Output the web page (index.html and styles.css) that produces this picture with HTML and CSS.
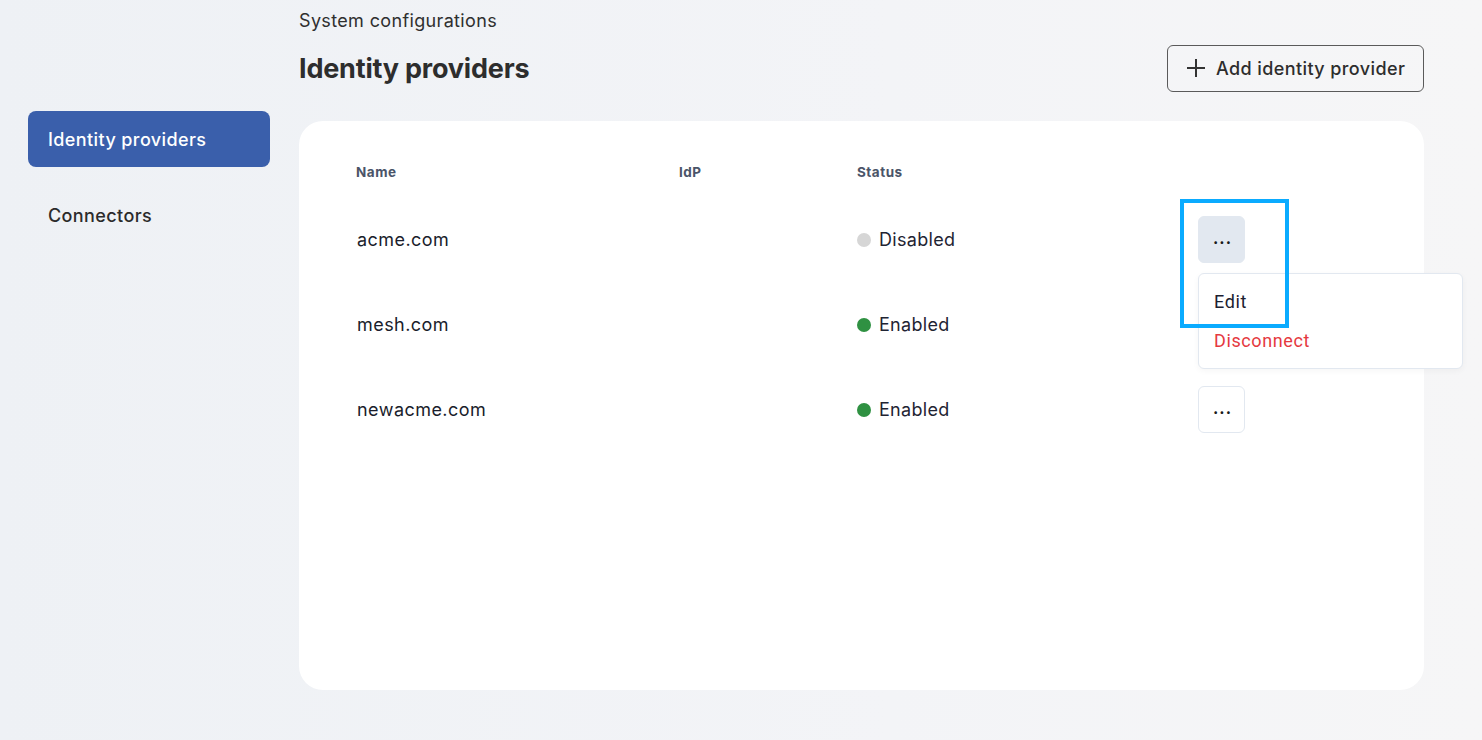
FILE: index.html
```html
<!DOCTYPE html>
<html lang="en">
<head>
    <meta charset="UTF-8">
    <title>Identity providers</title>
    <link rel="stylesheet" href="styles.css">
</head>
<body>
    <div class="layout">
        <aside class="sidebar">
            <a class="side-item active" href="#">Identity providers</a>
            <a class="side-item" href="#">Connectors</a>
        </aside>

        <main class="content">
            <div class="breadcrumb">System configurations</div>
            <div class="page-header">
                <h1>Identity providers</h1>
                <button class="add-btn">
                    <svg width="20" height="20" viewBox="0 0 20 20"><path d="M10 1v18M1 10h18" stroke="#333" stroke-width="2" fill="none"/></svg>
                    Add identity provider
                </button>
            </div>

            <section class="card">
                <div class="table">
                    <div class="row head">
                        <div>Name</div>
                        <div>IdP</div>
                        <div>Status</div>
                        <div></div>
                    </div>

                    <div class="row">
                        <div class="name">acme.com</div>
                        <div></div>
                        <div class="status"><span class="dot off"></span>Disabled</div>
                        <div class="actions">
                            <button class="more open">...</button>
                            <div class="menu">
                                <div class="menu-item">Edit</div>
                                <div class="menu-item danger">Disconnect</div>
                            </div>
                            <div class="highlight"></div>
                        </div>
                    </div>

                    <div class="row">
                        <div class="name">mesh.com</div>
                        <div></div>
                        <div class="status"><span class="dot on"></span>Enabled</div>
                        <div class="actions"></div>
                    </div>

                    <div class="row">
                        <div class="name">newacme.com</div>
                        <div></div>
                        <div class="status"><span class="dot on"></span>Enabled</div>
                        <div class="actions">
                            <button class="more">...</button>
                        </div>
                    </div>
                </div>
            </section>
        </main>
    </div>
</body>
</html>
```

FILE: styles.css
```css
* {
    margin: 0;
    padding: 0;
    box-sizing: border-box;
}

body {
    font-family: Inter, "Noto Sans", sans-serif;
    background: linear-gradient(90deg, #eef1f5 0%, #f3f4f7 60%, #f6f6f7 100%);
    color: #1f2330;
    height: 740px;
    overflow: hidden;
}

.layout {
    display: flex;
}

.sidebar {
    width: 299px;
    padding: 111px 29px 0 28px;
    display: flex;
    flex-direction: column;
    gap: 20px;
}

.side-item {
    display: flex;
    align-items: center;
    height: 56px;
    padding-left: 20px;
    border-radius: 8px;
    font-size: 18px;
    letter-spacing: 0.4px;
    font-weight: 500;
    color: #2b2b2b;
    text-decoration: none;
}

.side-item.active {
    background-color: #3a5fab;
    color: #fff;
}

.content {
    width: 1125px;
}

.breadcrumb {
    margin-top: 10px;
    font-size: 18px;
    letter-spacing: 0.35px;
    line-height: 22px;
    color: #2f2f2f;
}

.page-header {
    margin-top: 13px;
    height: 46px;
    display: flex;
    justify-content: space-between;
    align-items: center;
}

.page-header h1 {
    font-size: 27px;
    font-weight: 700;
    color: #2d2d2d;
    letter-spacing: -0.2px;
}

.add-btn {
    display: flex;
    align-items: center;
    gap: 10px;
    height: 47px;
    width: 257px;
    padding-left: 18px;
    border: 1px solid #5a5a5a;
    border-radius: 6px;
    background: transparent;
    font-family: Inter, sans-serif;
    font-size: 18px;
    letter-spacing: 0.4px;
    font-weight: 500;
    color: #2d2d2d;
}

.card {
    margin-top: 30px;
    height: 569px;
    background-color: #fff;
    border-radius: 24px;
    padding: 31px 0 0 57px;
}

.row {
    display: grid;
    grid-template-columns: 323px 178px 341px 1fr;
    align-items: center;
    height: 85px;
}

.row.head {
    height: 45px;
    padding-bottom: 5px;
    font-size: 13.5px;
    font-weight: 700;
    color: #4a5468;
    letter-spacing: 0.5px;
}

.name {
    font-size: 18px;
    letter-spacing: 0.45px;
    color: #1a1d2b;
    padding-left: 1px;
}

.status {
    display: flex;
    align-items: center;
    gap: 8px;
    font-size: 18px;
    letter-spacing: 0.3px;
    color: #1f2433;
}

.dot {
    width: 14px;
    height: 14px;
    border-radius: 50%;
}

.dot.off {
    background-color: #d6d6d6;
}

.dot.on {
    background-color: #2f9142;
}

.actions {
    position: relative;
    height: 47px;
}

.more {
    width: 47px;
    height: 47px;
    border: 1px solid #e2e8f0;
    border-radius: 6px;
    background: #fff;
    font-family: Inter, sans-serif;
    font-size: 16px;
    font-weight: 700;
    letter-spacing: 1px;
    color: #1a1a1a;
    padding: 0 0 4px 2px;
}

.more.open {
    background-color: #e2e8f0;
}

.menu {
    position: absolute;
    top: 57px;
    left: 0;
    width: 265px;
    padding: 8px 0;
    background: #fff;
    border: 1px solid #e2e8f0;
    border-radius: 6px;
    box-shadow: 0 2px 6px rgba(0, 0, 0, 0.04);
    z-index: 2;
}

.menu-item {
    height: 39px;
    line-height: 39px;
    padding-left: 15px;
    font-family: Roboto, sans-serif;
    font-size: 18px;
    letter-spacing: 0.6px;
    color: #1c2030;
}

.menu-item.danger {
    color: #e5393f;
}

.highlight {
    position: absolute;
    left: -18px;
    top: -17px;
    width: 109px;
    height: 129px;
    border: 4px solid #0aabff;
    z-index: 3;
}
```
